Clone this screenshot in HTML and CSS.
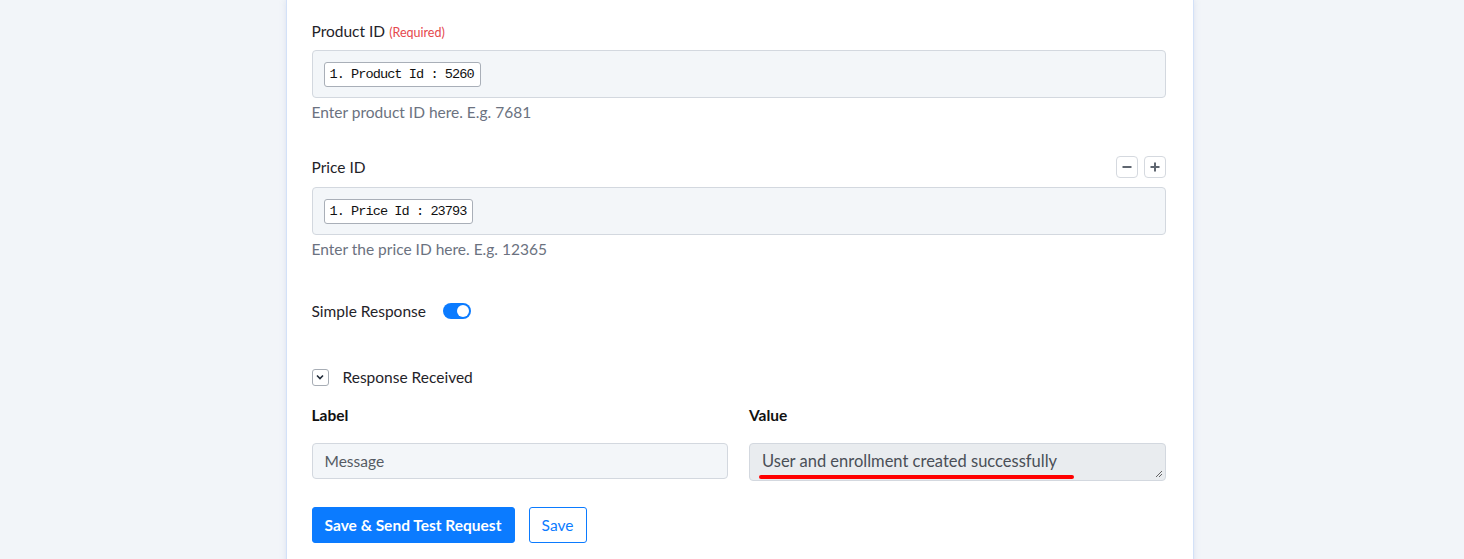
FILE: index.html
```html
<!DOCTYPE html>
<html>
<head>
<meta charset="utf-8">
<link rel="stylesheet" href="styles.css">
</head>
<body>
<div class="page">
  <div class="card">
    <div class="field">
      <div class="label-row"><span class="label">Product ID</span> <span class="req">(Required)</span></div>
      <div class="tag-input"><span class="chip">1. Product Id : 5260</span></div>
      <div class="help">Enter product ID here. E.g. 7681</div>
    </div>

    <div class="field field-price">
      <div class="label-row label-row-btns">
        <span class="label">Price ID</span>
        <div class="mini-btns">
          <button class="mini" aria-label="remove"><svg width="12" height="12" viewBox="0 0 12 12"><path d="M1.5 6h9" stroke="#5f6670" stroke-width="2"/></svg></button>
          <button class="mini" aria-label="add"><svg width="12" height="12" viewBox="0 0 12 12"><path d="M1.5 6h9M6 1.5v9" stroke="#5f6670" stroke-width="2"/></svg></button>
        </div>
      </div>
      <div class="tag-input"><span class="chip">1. Price Id : 23793</span></div>
      <div class="help">Enter the price ID here. E.g. 12365</div>
    </div>

    <div class="toggle-row">
      <span class="label">Simple Response</span>
      <span class="switch"><span class="knob"></span></span>
    </div>

    <div class="collapse-row">
      <span class="chev"><svg width="10" height="10" viewBox="0 0 10 10"><path d="M2 3.5l3 3 3-3" fill="none" stroke="#1f2937" stroke-width="1.6"/></svg></span>
      <span class="label">Response Received</span>
    </div>

    <div class="kv">
      <div class="kv-col">
        <div class="kv-head">Label</div>
        <div class="box">Message</div>
      </div>
      <div class="kv-col">
        <div class="kv-head">Value</div>
        <div class="box box-value">User and enrollment created successfully
          <span class="underline"></span>
          <svg class="grip" width="8" height="8" viewBox="0 0 8 8"><path d="M7 1L1 7M7 4L4 7" stroke="#555" stroke-width="0.9"/></svg>
        </div>
      </div>
    </div>

    <div class="actions">
      <button class="btn btn-primary">Save &amp; Send Test Request</button>
      <button class="btn btn-outline">Save</button>
    </div>
  </div>
</div>
</body>
</html>
```

FILE: styles.css
```css
* { box-sizing: border-box; }
html, body { margin: 0; padding: 0; }
body {
  background: #f2f5f9;
  font-family: Lato, "Open Sans", sans-serif;
  font-size: 15.5px;
  color: #1f2329;
  height: 559px;
  overflow: hidden;
}
.page {
  display: flex;
  justify-content: center;
  padding-left: 15px;
}
.card {
  width: 908px;
  background: #fff;
  border-left: 1px solid #d3e1f8;
  border-right: 1px solid #d3e1f8;
  box-shadow: 0 0 6px rgba(150, 170, 210, 0.25);
  padding: 21px 27px 30px 25px;
  min-height: 559px;
}
.label-row {
  height: 20px;
  line-height: 20px;
  display: flex;
  align-items: baseline;
  gap: 4px;
}
.label { font-size: 15.5px; color: #1f2329; }
.req { font-size: 12.5px; color: #e5484d; }
.tag-input {
  margin-top: 9px;
  height: 48px;
  background: #f3f6f9;
  border: 1px solid #d3d8df;
  border-radius: 4px;
  padding: 0 11px;
  display: flex;
  align-items: center;
}
.chip {
  font-family: "Liberation Mono", monospace;
  font-size: 13.6px;
  letter-spacing: -0.95px;
  color: #111;
  background: #fff;
  border: 1px solid #a9afb8;
  border-radius: 3px;
  height: 25px;
  line-height: 23px;
  padding: 0 6px 0 5px;
}
.help {
  margin-top: 4px;
  height: 20px;
  line-height: 20px;
  color: #6b7280;
  font-size: 15.5px;
}
.field-price { margin-top: 34px; }
.label-row-btns {
  height: 22px;
  align-items: center;
  justify-content: space-between;
}
.mini-btns { display: flex; gap: 6px; }
.mini {
  width: 22px;
  height: 22px;
  padding: 0;
  background: #fff;
  border: 1px solid #d5d9df;
  border-radius: 4px;
  display: flex;
  align-items: center;
  justify-content: center;
}
.toggle-row {
  margin-top: 42px;
  height: 20px;
  display: flex;
  align-items: center;
  gap: 17px;
}
.switch {
  width: 28px;
  height: 16px;
  border-radius: 8px;
  background: #0b7bff;
  position: relative;
}
.knob {
  position: absolute;
  right: 2px;
  top: 2px;
  width: 12px;
  height: 12px;
  border-radius: 50%;
  background: #fff;
}
.collapse-row {
  margin-top: 46px;
  height: 20px;
  display: flex;
  align-items: center;
  gap: 14px;
}
.chev {
  width: 17px;
  height: 17px;
  border: 1px solid #a7adb5;
  border-radius: 3px;
  display: flex;
  align-items: center;
  justify-content: center;
}
.kv {
  margin-top: 18px;
  display: grid;
  grid-template-columns: 1fr 1fr;
  gap: 21px;
}
.kv-head {
  height: 20px;
  line-height: 20px;
  font-weight: 700;
  font-size: 15.5px;
  color: #111;
  margin-bottom: 18px;
}
.box {
  height: 36px;
  background: #f3f6f9;
  border: 1px solid #d3d8df;
  border-radius: 4px;
  padding: 0 12px;
  display: flex;
  align-items: center;
  color: #555b63;
  font-size: 15.5px;
  position: relative;
}
.box-value {
  height: 38px;
  background: #e9ecef;
  color: #4a4f57;
  font-size: 16.5px;
  padding-bottom: 2px;
}
.underline {
  position: absolute;
  left: 9px;
  top: 31px;
  width: 315px;
  height: 4px;
  border-radius: 2px;
  background: #ff0000;
}
.grip {
  position: absolute;
  right: 2px;
  bottom: 2px;
}
.actions {
  margin-top: 26px;
  display: flex;
  gap: 14px;
}
.btn {
  height: 36px;
  border-radius: 3px;
  font-family: Lato, "Open Sans", sans-serif;
  font-size: 15.5px;
  padding: 0 10px;
}
.btn-primary {
  background: #0b7bff;
  color: #fff;
  border: 1px solid #0b7bff;
  font-weight: 700;
  width: 203px;
}
.btn-outline {
  background: #fff;
  color: #0b7bff;
  border: 1px solid #0b7bff;
  width: 58px;
  padding: 0;
}
```
